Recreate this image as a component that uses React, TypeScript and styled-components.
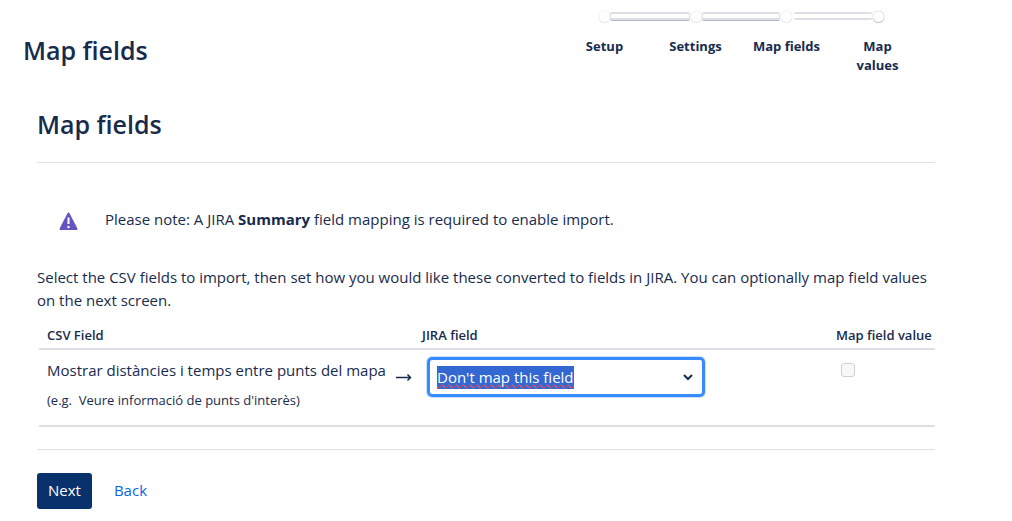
import React, { useEffect, useRef } from "react";
import styled, { createGlobalStyle } from "styled-components";

const GlobalStyle = createGlobalStyle`
  * { box-sizing: border-box; }
  body {
    margin: 0;
    background: #fff;
    color: #172b4d;
    font: 15px/23px "Open Sans", "Noto Sans", sans-serif;
  }
  h1, h2, p { margin: 0; }
  svg { display: block; flex: none; }
`;

const Header = styled.header`
  display: flex;
  justify-content: space-between;
  align-items: flex-start;
  padding: 10px 89px 0 23px;
`;

const PageTitle = styled.h1`
  padding-top: 24px;
  font-size: 25px;
  font-weight: 600;
  line-height: 32px;
`;

const Steps = styled.ol`
  display: flex;
  margin: 0;
  padding: 0;
  list-style: none;
`;

const Step = styled.li`
  width: 91px;
  display: flex;
  flex-direction: column;
  align-items: center;
  gap: 15px;
  font-size: 13px;
  font-weight: 700;
  line-height: 19px;
  text-align: center;
`;

const Track = styled.span`
  width: 100%;
  height: 12px;
  display: flex;
  align-items: center;
  justify-content: center;
`;

type BarKind = "done" | "open" | "none";

const Bar = styled.span<{ $kind: BarKind }>`
  flex: 1;
  height: 8px;
  border: solid #dcdfe4;
  border-width: ${(p) => (p.$kind === "none" ? "0" : "2px 0")};
  box-shadow: ${(p) => (p.$kind === "done" ? "0 1px 0 #b3b9c4" : "none")};
  &:first-child {
    margin-right: 1px;
    border-right-width: ${(p) => (p.$kind === "done" ? "1px" : "0")};
    border-radius: 0 2px 2px 0;
  }
  &:last-child {
    margin-left: ${(p) => (p.$kind === "open" ? "2px" : "0")};
    border-left-width: ${(p) => (p.$kind === "done" ? "1px" : "0")};
    border-radius: 2px 0 0 2px;
  }
`;

const Dot = styled.span<{ $last: boolean }>`
  flex: none;
  width: 11px;
  height: 11px;
  border-radius: 50%;
  background: #fff;
  box-shadow: 0 0 1px ${(p) => (p.$last ? "#8993a4" : "#c1c7d0")}, 0 1px 1px ${(p) => (p.$last ? "#c1c7d0" : "#ebecf0")};
`;

const StepLabel = styled.span`
  white-space: pre-line;
`;

const Main = styled.main`
  padding: 33px 77px 12px 37px;
`;

const SectionTitle = styled.h2`
  padding-bottom: 22px;
  border-bottom: 1px solid #dfe1e6;
  font-size: 25px;
  font-weight: 600;
  line-height: 32px;
`;

const Notice = styled.div`
  display: flex;
  align-items: flex-end;
  gap: 26px;
  padding: 45px 21px 35px;
`;

const Table = styled.table`
  width: calc(100% - 2px);
  margin: 12px 0 0 2px;
  border-collapse: separate;
  border-spacing: 0;
  text-align: left;
`;

const HeadCell = styled.th`
  padding: 1px 0 3px 8px;
  border-bottom: 2px solid #dcdfe4;
  font-size: 13px;
  font-weight: 600;
  line-height: 20px;
  white-space: nowrap;
`;

const Cell = styled.td`
  height: 77px;
  padding: 9px 0 0 8px;
  border-bottom: 2px solid #dcdfe4;
  vertical-align: top;
`;

const Example = styled.p`
  padding-top: 8px;
  font-size: 13px;
  line-height: 20px;
`;

const ArrowCell = styled(Cell)`
  width: 26px;
  padding: 22px 0 0 8px;
`;

const FieldCell = styled(Cell)`
  width: 414px;
  padding: 7px 0 0 13px;
`;

const Combo = styled.label`
  display: flex;
  align-items: center;
  width: 278px;
  height: 40px;
  padding: 0 8px 0 7px;
  border: 3px solid #388bff;
  border-radius: 5px;
  box-shadow: 0 0 0 1px #cce0ff;
`;

const ComboInput = styled.input`
  flex: 1;
  min-width: 0;
  padding: 0;
  border: 0;
  outline: 0;
  background: none;
  color: inherit;
  font: inherit;
  text-decoration: underline wavy #d9142c 1px;
  &::selection {
    background: #3367d1;
    color: #fff;
    text-decoration: underline wavy #d9142c 1px;
  }
`;

const ValueHead = styled(HeadCell)`
  width: 107px;
`;

const CheckCell = styled(Cell)`
  padding: 13px 0 0 13px;
`;

const Check = styled.input`
  appearance: none;
  display: block;
  width: 14px;
  height: 14px;
  margin: 0;
  border: 1px solid #d0d0d0;
  border-radius: 3px;
  background: #f8f8f8;
`;

const Actions = styled.div`
  display: flex;
  align-items: center;
  gap: 22px;
  margin-top: 22px;
  padding-top: 23px;
  border-top: 1px solid #dfe1e6;
`;

const NextButton = styled.button`
  height: 36px;
  padding: 0 11px 2px;
  border: 0;
  border-radius: 3px;
  background: #09326c;
  color: #fff;
  font: inherit;
`;

const BackLink = styled.a`
  padding-bottom: 2px;
  color: #0c66e4;
  text-decoration: none;
`;

const steps = ["Setup", "Settings", "Map fields", "Map\nvalues"];

function barKind(index: number): BarKind {
  if (index < 0 || index >= steps.length - 1) return "none";
  return index < 2 ? "done" : "open";
}

export default function App() {
  const inputRef = useRef<HTMLInputElement>(null);

  useEffect(() => {
    inputRef.current?.focus();
    inputRef.current?.select();
  }, []);

  return (
    <>
      <GlobalStyle />
      <Header>
        <PageTitle>Map fields</PageTitle>
        <Steps>
          {steps.map((step, i) => (
            <Step key={step}>
              <Track>
                <Bar $kind={barKind(i - 1)} />
                <Dot $last={i === steps.length - 1} />
                <Bar $kind={barKind(i)} />
              </Track>
              <StepLabel>{step}</StepLabel>
            </Step>
          ))}
        </Steps>
      </Header>
      <Main>
        <SectionTitle>Map fields</SectionTitle>
        <Notice>
          <svg width="21" height="20" viewBox="0 0 21 20" aria-hidden="true">
            <path d="M10.5 2.5 L18.5 18 H2.5 Z" fill="#6554c0" stroke="#6554c0" strokeWidth="2" strokeLinejoin="round" />
            <path d="M10.5 6.5 V13" stroke="#fff" strokeWidth="2" />
            <circle cx="10.5" cy="16" r="1.2" fill="#fff" />
          </svg>
          <p>
            Please note: A JIRA <strong>Summary</strong> field mapping is required to enable import.
          </p>
        </Notice>
        <p>
          Select the CSV fields to import, then set how you would like these converted to fields in JIRA. You can
          optionally map field values on the next screen.
        </p>
        <Table>
          <thead>
            <tr>
              <HeadCell scope="col" colSpan={2}>CSV Field</HeadCell>
              <HeadCell scope="col">JIRA field</HeadCell>
              <ValueHead scope="col">Map field value</ValueHead>
            </tr>
          </thead>
          <tbody>
            <tr>
              <Cell>
                <p>Mostrar distàncies i temps entre punts del mapa</p>
                <Example>(e.g.&nbsp; Veure informació de punts d'interès)</Example>
              </Cell>
              <ArrowCell>
                <svg width="16" height="11" viewBox="0 0 16 11" aria-hidden="true">
                  <path d="M0 5.5 H14 M11.5 2.5 L14.5 5.5 L11.5 8.5" fill="none" stroke="#172b4d" strokeWidth="1.5" />
                </svg>
              </ArrowCell>
              <FieldCell>
                <Combo>
                  <ComboInput ref={inputRef} aria-label="JIRA field" defaultValue="Don't map this field" spellCheck={false} />
                  <svg width="12" height="8" viewBox="0 0 12 8" aria-hidden="true">
                    <path d="M2 2 L6 6 L10 2" fill="none" stroke="#172b4d" strokeWidth="2" />
                  </svg>
                </Combo>
              </FieldCell>
              <CheckCell>
                <Check type="checkbox" disabled aria-label="Map field value" />
              </CheckCell>
            </tr>
          </tbody>
        </Table>
        <Actions>
          <NextButton type="button">Next</NextButton>
          <BackLink href="#back">Back</BackLink>
        </Actions>
      </Main>
    </>
  );
}
